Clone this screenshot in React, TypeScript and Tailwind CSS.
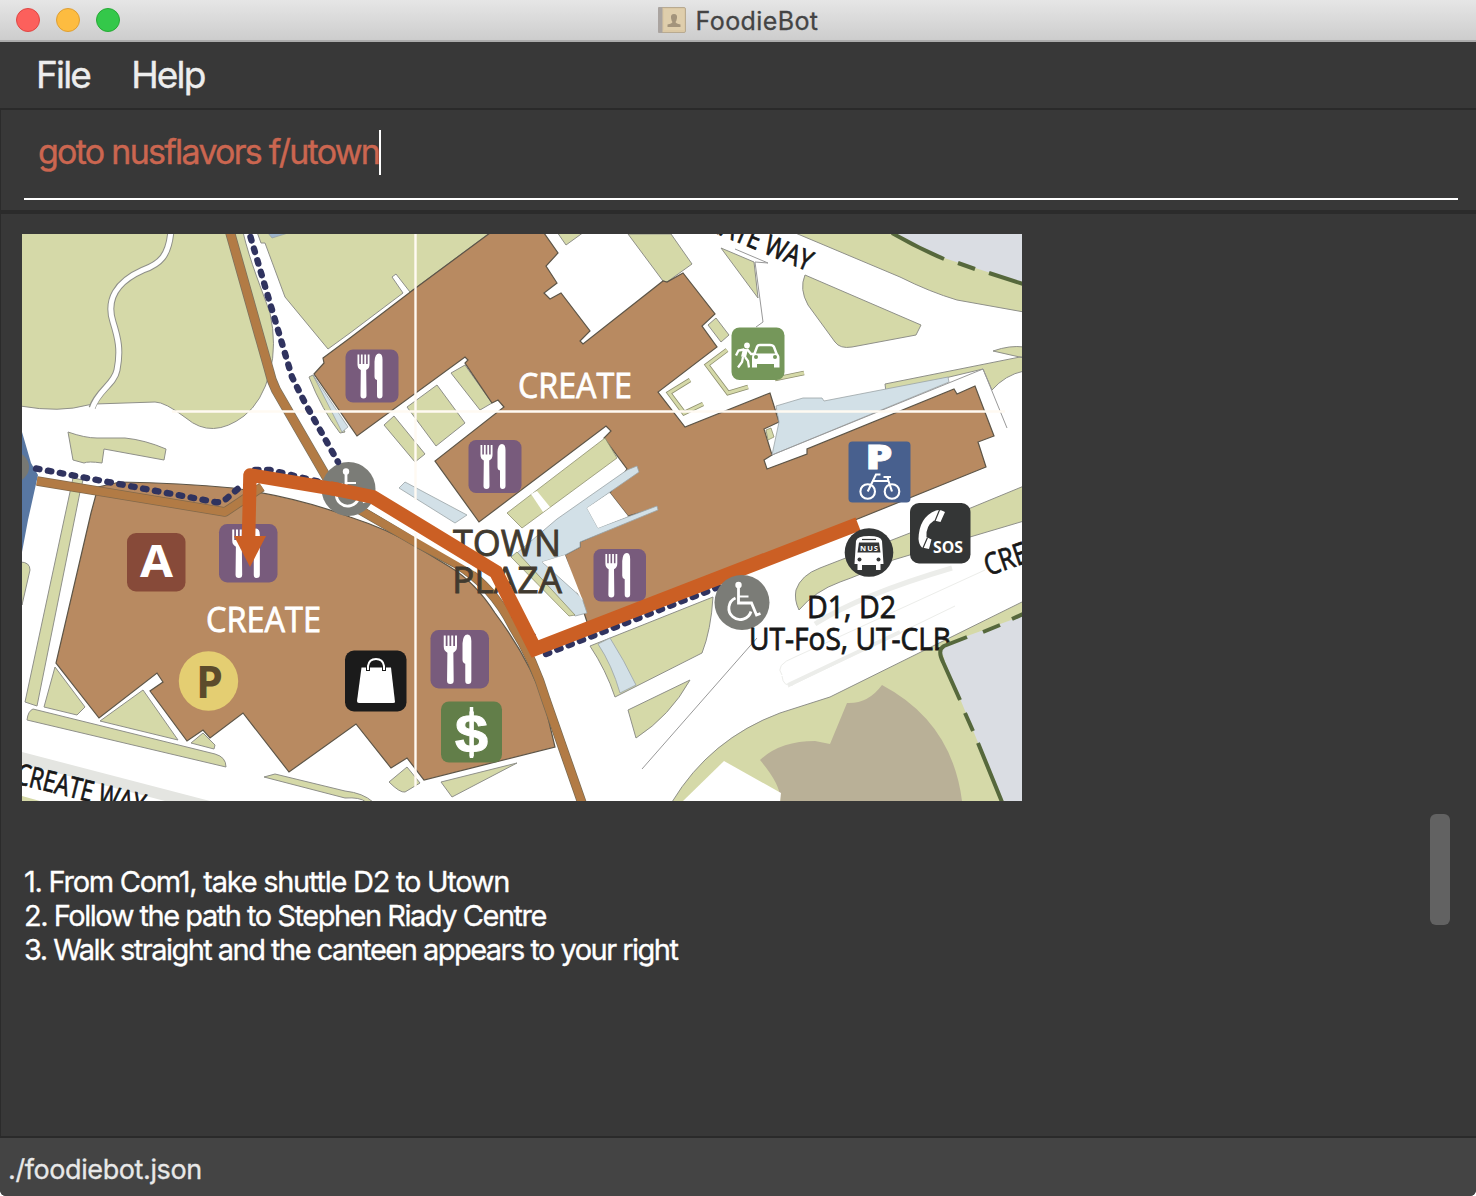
import React from "react";

const MAP_FONT = '"Open Sans", "Noto Sans", sans-serif';

function Cutlery({ x, y, s }: { x: number; y: number; s: number }) {
  return (
    <g transform={`translate(${x} ${y}) scale(${s / 53})`}>
      <rect width="53" height="53" rx="7.5" fill="#785b7c" />
      <path
        d="M12 5 V15 Q12 19 15.3 20.5 L15 46 Q15 49 18 49 Q21 49 21 46 L20.7 20.5 Q24 19 24 15 V5 H22.2 V14.500 H20.6 V5 H18.800 V14.500 H17.200 V5 H15.400 V14.500 H13.800 V5Z"
        fill="#fff"
      />
      <path d="M29 27 V12 Q29.500 4 33.500 4 Q37 4 37 10 V46 Q37 49 34 49 Q31.500 49 31.500 46 V30.500 Q29 30 29 27Z" fill="#fff" />
    </g>
  );
}

function Wheelchair() {
  return (
    <g fill="none" stroke="#fff" strokeLinecap="butt">
      <circle cx="24" cy="10.500" r="3.200" fill="#fff" stroke="none" />
      <path d="M24 13 V28.500 H37 L42 40.500 L46 39" strokeWidth="2.800" />
      <path d="M24 22 H34" strokeWidth="2" />
      <path d="M21 23.500 A11.300 11.300 0 1 0 36.500 37" strokeWidth="2.800" />
    </g>
  );
}

function Label({
  x, y, size, w, fill, weight = 400, children,
}: { x: number; y: number; size: number; w: number; fill: string; weight?: number; children: string }) {
  return (
    <text x={x} y={y} fontSize={size} textLength={w} lengthAdjust="spacingAndGlyphs" fill={fill} fontWeight={weight} stroke={fill} strokeWidth={weight === 400 ? 0.8 : 0}>
      {children}
    </text>
  );
}

function CampusMap() {
  return (
    <svg className="block h-[567px] w-[1000px] shrink-0 bg-white" viewBox="22 234 1000 567" fontFamily={MAP_FONT}>
      <g fill="#d5d9a8" stroke="#8f9089" strokeWidth="1">
        <path d="M20 232 H243 C250 262 262 290 270 313 Q277 345 270 372 Q262 402 244 416 Q212 440 186 418 Q165 402 155 402 L95 404 L88 405 Q60 413 20 406Z" />
        <path d="M257 232 L261 243 L265 243 L285 297 L328 349 L350 333 L403 293 L392 277 L396 274 L410 292 L491 232Z" />
        <path d="M68 432 Q85 438 97 438 L125 438 Q145 440 166 449 L164 460 L104 449 L102 463 Q88 461 84 463 L73 460Z" />
        <path d="M73 478 L83 480 L80 492 L37 706 L25 702Z" />
        <path d="M20 562 Q30 562 30 570 L22 605Z" />
        <path d="M55 667 L85 707 L77 715 L44 707Z" />
        <path d="M143 690 L178 740 L100 721Z" />
        <path d="M33 709 L215 754 Q226 757 226 767 L27 720 Q28 711 33 709Z" />
        <path d="M191 743 L203 733 L215 745 L214 749Z" />
        <path d="M264 777 L275 774 L345 791 Q363 793 373 802 L366 802 Q360 797 345 798Z" />
        <path d="M407 767 L420 783 L405 792 Q400 793 389 782Z M441 782 L517 763 L452 797Z" />
        <path d="M557 232 L566 245 L584 232Z M628 234 L663 281 L667 282 L692 264 L671 234Z" />
        <path d="M309 377 L313 375 L345 432 L340 433 Q322 410 309 377Z" />
        <path d="M465 365 L492 403 L480 410 L451 373Z M437 385 L465 423 L436 446 L407 407Z M394 416 L425 454 L415 462 L384 425Z" />
        <path d="M721 248 L754 262 L758 298Z" />
        <path d="M805 275 L921 325 L916 335 L852 347 Q840 349 835 342 L808 305 Q799 289 805 275Z" />
        <path d="M793 232 L900 277 Q930 292 957 300 L1024 312 V230Z" />
        <path d="M993 351 Q1010 345 1024 347 V358Z M885 384 L1020 357 L1024 357 V371 Q1005 375 992 390 L983 369 L886 392Z" />
        <path d="M708 325 L716 318 L729 335 L721 342Z" />
        <path d="M1024 486 L910 533 L820 568 Q801 575 796 590 Q794 600 799 610 Q815 591 840 582 Q860 575 893 560 L970 537 L1024 521Z" />
        <path d="M1024 601 L830 697 L780 713 Q710 739 672 802 H1024Z" />
        <path d="M590 646 L713 597 Q711 630 702 653 L615 697 Q606 670 590 646Z M628 710 L690 680 Q670 716 636 738Z" />
      </g>

      <path d="M171 230 C169 256 160 264 143 270 C116 282 106 300 113 322 C118 338 121 350 117 370 C114 385 98 390 92 408" fill="none" stroke="#8f9089" strokeWidth="7" />
      <path d="M171 230 C169 256 160 264 143 270 C116 282 106 300 113 322 C118 338 121 350 117 370 C114 385 98 390 92 409" fill="none" stroke="#fff" strokeWidth="5" />
      <path d="M735 249 L768 263 L755 262 L763 322 L756 327 M642 769 L757 638" fill="none" stroke="#999" />

      <g fill="none" stroke="#8f9070" strokeWidth="4.600">
        <path d="M727 350 L707 365 L728 393 L748 387 M690 380 L669 393 L684 413 L703 404 M775 379 L804 373" />
      </g>
      <g fill="none" stroke="#d5d9a8" strokeWidth="3">
        <path d="M727 350 L707 365 L728 393 L748 387 M690 380 L669 393 L684 413 L703 404 M775 379 L804 373" />
      </g>

      <path d="M892 234 Q918 248 944 258 L1022 283 V234Z M1022 616 L948 643 Q940 648 945 662 L1002 801 H1022Z" fill="#dadde3" />
      <path d="M22 752 L210 801 H165 L22 764Z" fill="#e4e5e1" />
      <path d="M22 796 L40 801 H22Z" fill="#d5d9a8" />
      <g stroke="#ecedea" fill="none">
        <path d="M782 675 Q774 665 795 657 L985 570 M788 687 L955 606" strokeWidth="1" />
        <path d="M788 685 L900 632" strokeWidth="4" />
        <path d="M815 624 Q860 595 952 568" strokeWidth="5" />
        <path d="M782 676 Q783 687 793 685" />
      </g>
      <path d="M760 760 Q780 741 815 741 L830 744 L847 703 Q868 704 882 685 Q952 722 962 801 H780 Q782 786 760 760Z" fill="#b9b097" />
      <path d="M724 761 L781 793 L780 802 H682Z" fill="#fff" />

      <g fill="#b88a61" stroke="#5d5547" strokeWidth="1.200">
        <path d="M314 374 L324 363 L323 358 L350 338 L413 290 L490 233 H544 L558 253 L546 266 L557 283 L544 293 L550 299 L561 293 L590 331 L580 341 L583 344 L663 281 L667 282 L683 273 L715 314 L702 326 L717 347 L658 392 L685 427 L770 393 L779 422 L764 429 L772 455 L764 460 L767 469 L807 454 L807 449 L954 389 L957 394 L975 386 L994 436 L978 442 L986 467 L860 518 L588 625 L565 555 L580 547 L580 542 L657 508 L628 516 L610 493 L627 469 L604 438 L611 431 L606 426 L479 522 L435 461 L504 407 L498 400 L492 403 L465 363 L468 360 L465 357 L357 436Z" />
        <path d="M98 487 L120 482 Q180 483 233 488 Q300 498 350 517 Q390 530 417 547 L450 567 Q475 582 495 613 Q530 660 545 705 L555 747 L424 780 L407 758 L391 768 L356 724 L289 772 L243 713 L210 738 L203 730 L187 741 L150 691 L163 682 L157 673 L99 718 L56 663 L91 513Z" />
      </g>

      <g fill="#d2e0e7" stroke="#9aa3a6" strokeWidth="0.800">
        <path d="M776 406 L803 398 L822 398 L824 401 L948 377 L949 382 L772 455 L779 422Z" />
        <path d="M313 375 L348 427 L342 432Z" />
        <path d="M405 482 L399 488 L455 523 L467 515Z" />
        <path d="M627 470 L637 466 L639 472 L610 492 L587 508 L598 528 L657 506 L658 510 L580 542 L580 547 L565 555 L542 562 L582 598 L587 613 L575 616 L517 553 L557 519Z" />
        <path d="M598 644 L610 638 Q624 660 636 685 L620 693 Q612 665 598 644Z" />
        <path d="M268 233 L272 238 L288 233Z" fill="#9fb6cc" />
      </g>
      <path d="M610 493 L628 516 L598 528 L587 508Z" fill="#fff" />
      <path d="M542 562 L565 555 L583 601 Q565 574 542 562Z" fill="#fff" />
      <g fill="#d5d9a8" stroke="#8f9070" strokeWidth="0.800">
        <path d="M605 438 L617 458 L522 528 L507 513Z" />
        <path d="M517 552 L511 557 L569 616 L575 615Z" />
        <path d="M766 430 L771 428 L774 437 L768 440Z" />
      </g>
      <path d="M531 494 L537 491 L550 507 L543 512Z" fill="#fff" />
      <path d="M772 455 L983 369 L1007 428" fill="none" stroke="#999" />

      <path d="M22 432 L31 463 L38 475 L28 520 L22 552Z" fill="#5877a2" />
      <circle cx="14" cy="467" r="15" fill="#777873" />

      <g fill="none" strokeLinejoin="round">
        <path d="M37 481 L225 512 L240 502 L262 487" stroke="#82694b" strokeWidth="9.500" />
        <path d="M37 481 L225 512 L240 502 L262 487" stroke="#b27b45" strokeWidth="8" />
        <path d="M230 232 L269 370 Q271 380 276 390 L327 478" stroke="#7b725f" strokeWidth="10" />
        <path d="M230 232 L269 370 Q271 380 276 390 L327 478" stroke="#b27b45" strokeWidth="8.500" />
        <path d="M360 510 L417 543 L455 563 Q492 585 513 627 Q534 660 546 700 L582 803" stroke="#7b6b52" strokeWidth="9.500" />
        <path d="M360 510 L417 543 L455 563 Q492 585 513 627 Q534 660 546 700 L582 803" stroke="#b27b45" strokeWidth="8" />
        <path d="M360 502 L417 536 L476 570" stroke="#fff" strokeWidth="4" />
      </g>

      <g stroke="#fffaf2" strokeWidth="2.400">
        <path d="M172 411.500 H1005 M415.500 234 V500 M415.500 533 V787" />
      </g>

      <Label x={518} y={398} size={35} w={114} fill="#fff">CREATE</Label>
      <Label x={206} y={632} size={35} w={115} fill="#fff">CREATE</Label>
      <Label x={453} y={556} size={37} w={108} fill="#413a2f">TOWN</Label>
      <Label x={452} y={593} size={37} w={110} fill="#413a2f">PLAZA</Label>
      <g transform="rotate(22.500 807 271)">
        <Label x={699} y={271} size={28} w={109} fill="#171717">EATE WAY</Label>
      </g>
      <g transform="rotate(14 22 785)">
        <Label x={14} y={785} size={29} w={132} fill="#171717">CREATE WAY</Label>
      </g>
      <g transform="rotate(-19 988 575)">
        <Label x={988} y={576} size={30} w={86} fill="#171717">CREATE</Label>
      </g>

      <circle cx="348.500" cy="489" r="27" fill="#7b7c77" />
      <g transform="translate(322 461)"><Wheelchair /></g>

      <g fill="none" stroke="#30335f" strokeWidth="6.400" strokeLinecap="round" strokeDasharray="3.500 8.600">
        <path d="M250.500 237 L267 293 L292 377 L305 403 L338 462" />
        <path d="M36 468.500 L215 502 Q222 503 226 499 L240 487" />
        <path d="M255 470 L270 470 L320 482" />
        <path d="M546 654 L690 598 L724 585" />
        <path d="M513 617 L538 638" strokeWidth="3" />
      </g>

      <Cutlery x={345.500} y={349.500} s={53} />
      <Cutlery x={468.500} y={440} s={53} />
      <Cutlery x={593.500} y={549} s={52.500} />
      <Cutlery x={219} y={524} s={58.500} />
      <Cutlery x={430.500} y={630} s={58.500} />

      <path d="M858 524 L535 649 L496 572 L373 497 L330 488" fill="none" stroke="#cb5f24" strokeWidth="14" />
      <path d="M340 490 L250 475 L248.500 540" fill="none" stroke="#cb5f24" strokeWidth="13.500" strokeLinejoin="round" />
      <path d="M234 536 H266 L250 567Z" fill="#cb5f24" />

      <rect x="127" y="533" width="58.500" height="58.500" rx="9" fill="#874a39" />
      <Label x={140} y={577} size={45} w={33} fill="#fff" weight={700}>A</Label>
      <circle cx="208.500" cy="681" r="29.700" fill="#e4ce72" />
      <Label x={196} y={698} size={45} w={27} fill="#5c4b2b" weight={700}>P</Label>

      <rect x="345" y="650.500" width="61.500" height="61" rx="9" fill="#1b1b1b" />
      <path d="M361.500 667.500 H391 L395 702 Q395 703 393 703 H359 Q357 703 357 701Z" fill="#fff" />
      <path d="M368 671 V666 Q369 658.500 376 658.500 Q383 658.500 384 666 V671" fill="none" stroke="#1b1b1b" strokeWidth="4" />
      <path d="M368 670 V666 Q369 659 376 659 Q383 659 384 666 V670" fill="none" stroke="#fff" strokeWidth="2" />

      <rect x="441" y="701.500" width="61" height="61" rx="8" fill="#627e49" />
      <text x="471.500" y="751.500" fontSize="53" fontWeight="700" fontFamily='"Liberation Sans", sans-serif' textAnchor="middle" fill="#fff" stroke="#fff" strokeWidth="1" textLength="33" lengthAdjust="spacingAndGlyphs">$</text>
      <path d="M471.500 707 V758" stroke="#fff" strokeWidth="3.500" />

      <rect x="731.500" y="327.500" width="53" height="52.500" rx="8" fill="#75975a" />
      <g fill="none" stroke="#fff" strokeWidth="2.500">
        <circle cx="747" cy="345.500" r="2.900" fill="#fff" stroke="none" />
        <path d="M745.500 349 L743.500 357" strokeWidth="5" />
        <path d="M744 349.500 L738.500 350.500 L736 355.500 M747 349 L751 354 H756 M743 357 L742 362 L738 367.500 M745 357 L748 361 L749 367.500" strokeWidth="2.300" />
        <path d="M754 355 L757 347 Q757.500 345 760 345 H770 Q773 345 774 347 L777 355" />
        <path d="M754 353.500 H777 Q779.500 354 779.500 358 V367.500 H774 V364 H757 V367.500 H752 V358 Q752 354 754 353.500Z" fill="#fff" stroke="none" />
        <circle cx="756" cy="357" r="2" fill="#75975a" stroke="none" />
        <circle cx="775" cy="357" r="2" fill="#75975a" stroke="none" />
      </g>

      <rect x="848.500" y="441.500" width="62" height="61" rx="4" fill="#48608e" />
      <text x="865.500" y="469" fontSize="34" fontWeight="800" fill="#fff" stroke="#fff" strokeWidth="0.800" textLength="27" lengthAdjust="spacingAndGlyphs">P</text>
      <g fill="none" stroke="#fff" strokeWidth="2.100">
        <circle cx="867.700" cy="491.500" r="7.300" />
        <circle cx="892" cy="491.500" r="7.300" />
        <path d="M867.700 491.500 L876 474.500 H880.500 M873.500 481 H888.500 L892 491.500 M888.500 481 L887.500 477 M883.500 477 H891" />
      </g>

      <circle cx="869" cy="552.500" r="24.300" fill="#343636" />
      <path d="M856 541 Q857 536 869 536 Q881 536 882 541 L883.500 564 H880.500 V570 H876 V565 H862 V570 H857.500 V564 H854.500Z" fill="#fff" />
      <path d="M862 539.500 H876" stroke="#343636" strokeWidth="1.200" />
      <path d="M859 542.500 H879 L880.500 552.500 H857.500Z" fill="#343636" />
      <text x="869" y="550.500" fontSize="7.500" fontWeight="700" textAnchor="middle" fill="#fff" textLength="18" lengthAdjust="spacing">NUS</text>
      <circle cx="859.500" cy="559.500" r="2" fill="#343636" />
      <circle cx="878.500" cy="559.500" r="2" fill="#343636" />

      <rect x="910" y="503" width="60.500" height="60.500" rx="9" fill="#343636" />
      <path d="M936 510.500 Q919 517 918.500 539 Q919 545 922 547.500 L929 549 L931.500 539.500 L926.500 537 Q925.500 526 934 520.500 L940.500 522 L945 512 Q940 509 936 510.500Z" fill="#fff" />
      <path d="M939.500 510 L935 521 M923 548 L927.500 537.500" stroke="#343636" strokeWidth="1.200" />
      <Label x={933} y={553} size={16.500} w={30} fill="#fff" weight={700}>SOS</Label>

      <circle cx="742" cy="602.500" r="27.500" fill="#7b7c77" />
      <g transform="translate(714.500 574.500)"><Wheelchair /></g>

      <Label x={807} y={618} size={31} w={89} fill="#171717">D1, D2</Label>
      <Label x={749} y={650} size={31} w={202} fill="#171717">UT-FoS, UT-CLB</Label>
      <path d="M940 655 V648 L952 642 V655Z" fill="#dadde3" />

      <g fill="none" stroke="#56683c" strokeWidth="4">
        <path d="M892 233 Q918 248 944 259 M958 263 L975 269 M989 273 L1023 284" />
        <path d="M967 637 L944 646 Q937 650 943 662 L960 700 M965 713 L973 731 M978 743 L1002 802 M983 632 L1000 625 M1012 619 L1023 614" />
      </g>
    </svg>
  );
}

function BookIcon() {
  return (
    <svg className="h-[26px] w-7" viewBox="0 0 28 26">
      <rect x="0.500" y="0.500" width="27" height="25" rx="1.500" fill="#dbc8a4" stroke="#b8aa91" />
      <rect x="0" y="0" width="4.500" height="26" rx="1" fill="#aaa4a0" />
      <rect x="6" y="2" width="20" height="21" fill="#dfceac" />
      <path d="M16 7 Q19.500 7 19 11 Q18.500 14 17.500 15 Q18 16.500 22.500 17.500 V20 H9.500 V17.500 Q14 16.500 14.500 15 Q13.500 14 13 11 Q12.500 7 16 7Z" fill="#a3947c" />
    </svg>
  );
}

export default function App() {
  return (
    <div className="flex h-[1196px] w-[1476px] flex-col overflow-hidden rounded-b-md bg-[#383838] font-['Inter',sans-serif] text-white">
      <header className="relative flex h-[42px] shrink-0 items-center justify-center gap-[10px] border-b-2 border-[#acacac] bg-linear-to-b from-[#e6e6e6] to-[#cdcdcd]">
        <div className="absolute left-4 top-2 flex gap-4">
          <span className="size-6 rounded-full border border-[#df4744] bg-[#fc605c]" />
          <span className="size-6 rounded-full border border-[#de9f34] bg-[#fdbc40]" />
          <span className="size-6 rounded-full border border-[#27aa35] bg-[#34c84a]" />
        </div>
        <BookIcon />
        <h1 className="pt-0.5 text-[25px] leading-none tracking-[0.400px] text-[#444] [-webkit-text-stroke:0.3px_#444]">FoodieBot</h1>
      </header>

      <nav className="flex h-[68px] shrink-0 items-center gap-[41px] border-b-2 border-[#2a2a2a] pb-0.5 pl-9 text-[37px] leading-none tracking-[-1.800px] text-[#ededed] [-webkit-text-stroke:0.4px_#ededed]">
        <span>File</span>
        <span>Help</span>
      </nav>

      <section className="flex h-[104px] shrink-0 flex-col border-b-4 border-l border-[#2b2b2b] pl-[23px] pr-[18px]">
        <div className="flex h-[90px] items-center border-b-2 border-white pb-1 pl-[14px]">
          <span className="text-[34px] leading-none tracking-[-1.740px] text-[#cb6650] [-webkit-text-stroke:0.4px_#cb6650]">goto nusflavors f/utown</span>
          <span className="h-[45px] w-[2px] bg-white" />
        </div>
      </section>

      <main className="flex grow justify-between border-l border-[#2b2b2b] pl-[21px] pr-[26px] pt-5">
        <div className="flex flex-col">
          <CampusMap />
          <ol className="mt-16 pl-[2px] text-[29px] leading-[34px] [-webkit-text-stroke:0.3px_#fff]">
            <li className="tracking-[-1.270px]">1. From Com1, take shuttle D2 to Utown</li>
            <li className="tracking-[-1.480px]">2. Follow the path to Stephen Riady Centre</li>
            <li className="tracking-[-1.530px]">3. Walk straight and the canteen appears to your right</li>
          </ol>
        </div>
        <div className="mt-[580px] h-[111px] w-5 rounded-md bg-[#626262]" />
      </main>

      <footer className="flex h-[60px] shrink-0 items-center border-t-2 border-[#2a2a2a] bg-[#444] pl-2 pt-1 text-[27px] leading-none tracking-[-0.400px] text-[#e8e8e8] [-webkit-text-stroke:0.3px_#e8e8e8]">
        ./foodiebot.json
      </footer>
    </div>
  );
}
